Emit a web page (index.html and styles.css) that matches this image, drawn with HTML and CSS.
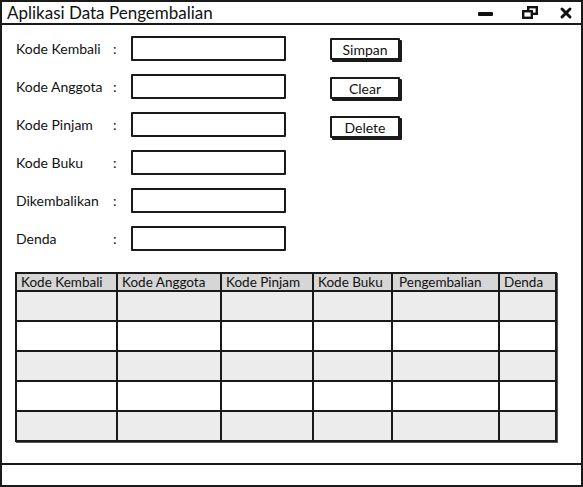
FILE: index.html
```html
<!DOCTYPE html>
<html lang="id">
<head>
    <meta charset="UTF-8">
    <meta name="viewport" content="width=device-width, initial-scale=1.0">
    <title>Aplikasi Data Pengembalian</title>
    <link rel="stylesheet" href="styles.css">
</head>
<body>
    <div class="window">
        <div class="titlebar">
            <span class="title">Aplikasi Data Pengembalian</span>
            <svg class="controls" width="100" height="21" viewBox="0 0 100 21">
                <!-- minimize -->
                <rect x="3" y="10" width="15" height="4" rx="1" fill="#111"/>
                <!-- restore -->
                <rect x="53.2" y="5.2" width="8.6" height="6.6" fill="none" stroke="#111" stroke-width="2.4"/>
                <rect x="48.2" y="9.2" width="8.6" height="6.6" fill="#fff" stroke="#111" stroke-width="2.4"/>
                <!-- close -->
                <path d="M87 7 L95 15 M95 7 L87 15" stroke="#111" stroke-width="3" stroke-linecap="round"/>
            </svg>
        </div>

        <div class="content">
            <div class="top">
                <div class="form">
                    <label>Kode Kembali</label><span class="colon">:</span><input type="text">
                    <label>Kode Anggota</label><span class="colon">:</span><input type="text">
                    <label>Kode Pinjam</label><span class="colon">:</span><input type="text">
                    <label>Kode Buku</label><span class="colon">:</span><input type="text">
                    <label>Dikembalikan</label><span class="colon">:</span><input type="text">
                    <label>Denda</label><span class="colon">:</span><input type="text">
                </div>
                <div class="buttons">
                    <button>Simpan</button>
                    <button>Clear</button>
                    <button>Delete</button>
                </div>
            </div>

            <table class="data-table">
                <colgroup>
                    <col style="width:101px">
                    <col style="width:104px">
                    <col style="width:92px">
                    <col style="width:79px">
                    <col style="width:107px">
                    <col style="width:57px">
                </colgroup>
                <thead>
                    <tr>
                        <th>Kode Kembali</th>
                        <th>Kode Anggota</th>
                        <th>Kode Pinjam</th>
                        <th>Kode Buku</th>
                        <th class="center">Pengembalian</th>
                        <th>Denda</th>
                    </tr>
                </thead>
                <tbody>
                    <tr><td></td><td></td><td></td><td></td><td></td><td></td></tr>
                    <tr><td></td><td></td><td></td><td></td><td></td><td></td></tr>
                    <tr><td></td><td></td><td></td><td></td><td></td><td></td></tr>
                    <tr><td></td><td></td><td></td><td></td><td></td><td></td></tr>
                    <tr><td></td><td></td><td></td><td></td><td></td><td></td></tr>
                </tbody>
            </table>
        </div>

        <div class="statusbar"></div>
    </div>
</body>
</html>
```

FILE: styles.css
```css
* {
    box-sizing: border-box;
}

body {
    margin: 0;
    background-color: #fff;
    font-family: 'Lato', 'Noto Sans', sans-serif;
    color: #111;
}

/* Window frame */
.window {
    width: 583px;
    height: 487px;
    border: 2px solid #1a1a1a;
    display: flex;
    flex-direction: column;
}

.titlebar {
    height: 23px;
    border-bottom: 2px solid #1a1a1a;
    display: flex;
    align-items: flex-start;
}

.title {
    font-size: 17px;
    line-height: 21px;
    padding-left: 5px;
}

.controls {
    margin-left: auto;
    margin-right: 6px;
}

.content {
    flex: 1;
    padding: 11px 0 0 14px;
}

/* Form + buttons */
.top {
    display: flex;
    align-items: flex-start;
}

.form {
    display: grid;
    grid-template-columns: 97px 18px 155px;
    grid-auto-rows: 25px;
    row-gap: 13px;
    align-items: center;
}

.form label {
    font-size: 14px;
}

.colon {
    font-size: 14px;
}

.form input {
    width: 155px;
    height: 25px;
    margin: 0;
    border: 2px solid #1a1a1a;
    border-radius: 1px;
    background: #fff;
}

.buttons {
    display: flex;
    flex-direction: column;
    gap: 17px;
    margin-left: 44px;
    margin-top: 2px;
}

.buttons button {
    width: 70px;
    height: 22px;
    padding: 0;
    font-family: inherit;
    font-size: 14px;
    color: #111;
    background: #fff;
    border: 2px solid #1a1a1a;
    border-radius: 1px;
    box-shadow: 2px 2px 0 #1a1a1a;
}

/* Data table */
.data-table {
    margin-top: 21px;
    margin-left: -1px;
    width: 540px;
    table-layout: fixed;
    border-collapse: collapse;
    border: 2px solid #1a1a1a;
    box-shadow: 1px 1px 0 #555;
}

.data-table th {
    height: 18px;
    padding: 0 0 0 4px;
    background: #d6d6d6;
    font-size: 13.5px;
    font-weight: normal;
    text-align: left;
    line-height: 15px;
    border: 2px solid #1a1a1a;
    white-space: nowrap;
    overflow: hidden;
}

.data-table th.center {
    padding-left: 6px;
}

.data-table td {
    height: 30px;
    padding: 0;
    border: 2px solid #1a1a1a;
}

.data-table tbody tr:nth-child(odd) td {
    background: #ececec;
}

.data-table tbody tr:nth-child(even) td {
    background: #fff;
}

.statusbar {
    height: 22px;
    border-top: 2px solid #1a1a1a;
}
```
